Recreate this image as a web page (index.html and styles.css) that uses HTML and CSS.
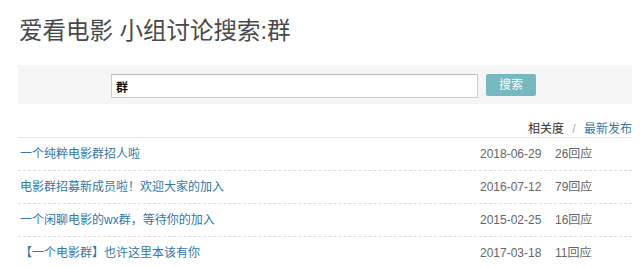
FILE: index.html
```html
<!DOCTYPE html>
<html lang="zh-CN">
<head>
<meta charset="utf-8">
<title>爱看电影 小组讨论搜索:群</title>
<link rel="stylesheet" href="styles.css">
</head>
<body>
<div class="page">
  <h1 class="title">爱看电影 小组讨论搜索:群</h1>
  <form class="search-band">
    <input class="search-input" type="text" value="群">
    <button class="search-btn" type="button">搜索</button>
  </form>
  <div class="sort">
    <span class="sort-current">相关度</span>
    <span class="sort-sep">/</span>
    <a class="sort-link" href="#">最新发布</a>
  </div>
  <ul class="topics">
    <li class="topic">
      <a class="topic-title" href="#">一个纯粹电影群招人啦</a>
      <span class="topic-date">2018-06-29</span>
      <span class="topic-reply">26回应</span>
    </li>
    <li class="topic">
      <a class="topic-title" href="#">电影群招募新成员啦！欢迎大家的加入</a>
      <span class="topic-date">2016-07-12</span>
      <span class="topic-reply">79回应</span>
    </li>
    <li class="topic">
      <a class="topic-title" href="#">一个闲聊电影的wx群，等待你的加入</a>
      <span class="topic-date">2015-02-25</span>
      <span class="topic-reply">16回应</span>
    </li>
    <li class="topic">
      <a class="topic-title" href="#">【一个电影群】也许这里本该有你</a>
      <span class="topic-date">2017-03-18</span>
      <span class="topic-reply">11回应</span>
    </li>
  </ul>
</div>
</body>
</html>
```
FILE: styles.css
```css
* { box-sizing: border-box; }
html, body { margin: 0; padding: 0; background: #fff; }
body {
  font-family: "Liberation Sans", "Noto Sans CJK SC", sans-serif;
  font-size: 12px;
  color: #494949;
}
.page {
  width: 614px;
  margin: 0 0 0 18px;
}
.title {
  margin: 17px 0 20px 1px;
  font-size: 23.5px;
  line-height: 28px;
  font-weight: normal;
  color: #494949;
}
.search-band {
  display: flex;
  align-items: flex-start;
  gap: 8px;
  height: 39px;
  margin: 0;
  padding: 9px 0 0 93px;
  background: #f5f5f5;
}
.search-input {
  width: 367px;
  height: 24px;
  margin: 0;
  padding: 0 4px;
  border: 1px solid #ccc;
  border-top-color: #bbb;
  background: #fff;
  font-family: "Liberation Sans", "Noto Sans CJK SC", sans-serif;
  font-size: 12px;
  font-weight: bold;
  color: #111;
  outline: none;
}
.search-btn {
  width: 50px;
  height: 22px;
  margin: 0;
  padding: 0;
  border: 0;
  border-radius: 2px;
  background: #76b8be;
  color: #fff;
  font-family: "Liberation Sans", "Noto Sans CJK SC", sans-serif;
  font-size: 12px;
  line-height: 22px;
}
.sort {
  margin-top: 17px;
  text-align: right;
  font-size: 12px;
  line-height: 16px;
  border-bottom: 1px solid #e6e6e6;
}
.sort-current { color: #333; }
.sort-sep { color: #aaa; margin: 0 5px; }
.sort-link { color: #37a; text-decoration: none; }
.topics {
  list-style: none;
  margin: 0;
  padding: 0;
}
.topic {
  display: grid;
  grid-template-columns: 1fr 75px 77px;
  align-items: center;
  padding: 8px 0;
  line-height: 16px;
  border-bottom: 1px dashed #ddd;
}
.topic:last-child { border-bottom: 0; }
.topic-title {
  color: #37a;
  text-decoration: none;
  padding-left: 2px;
}
.topic-date, .topic-reply { color: #666; }
```
